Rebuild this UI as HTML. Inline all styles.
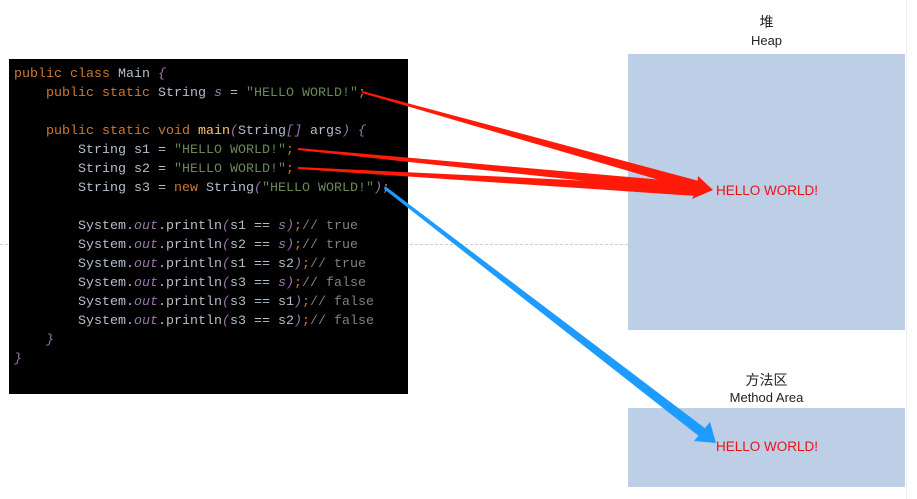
<!DOCTYPE html>
<html><head><meta charset="utf-8"><style>
body{margin:0;width:917px;height:499px;background:#fff;position:relative;overflow:hidden;font-family:"Liberation Sans","Noto Sans CJK SC",sans-serif}
.dash{position:absolute;left:0;top:244px;width:628px;border-top:1px dashed #ccc}
.vl{position:absolute;left:906px;top:0;width:1px;height:499px;background:#eee}
.code{position:absolute;left:9px;top:59px;width:399px;height:335px;background:#000}
pre{margin:0;position:absolute;left:14px;top:65px;font-family:"Liberation Mono",monospace;font-size:13.33px;line-height:19px;color:#b4bfcc}
.k{color:#cc7832}.s{color:#6a8759}.p{color:#9876aa;font-style:italic}.c{color:#808080}.f{color:#ffc66d}
.box{position:absolute;left:628px;width:277px;background:#bccfe7}
.t{position:absolute;width:277px;left:628px;text-align:center;font-size:13px;color:#222}
.h{position:absolute;left:716px;color:#ee1111;font-size:13.5px}
svg{position:absolute;left:0;top:0}
</style></head><body>
<div class="dash"></div><div class="vl"></div>
<div class="t" style="top:12px;font-size:14px">堆</div>
<div class="t" style="top:33px">Heap</div>
<div class="box" style="top:54px;height:276px"></div>
<div class="t" style="top:370px;font-size:14px">方法区</div>
<div class="t" style="top:390px">Method Area</div>
<div class="box" style="top:408px;height:79px"></div>
<div class="h" style="top:183px">HELLO WORLD!</div>
<div class="h" style="top:439px">HELLO WORLD!</div>
<div class="code"></div>
<pre><span class="k">public class</span> Main <span class="p">{</span>
    <span class="k">public static</span> String <span class="p">s</span> = <span class="s">"HELLO WORLD!"</span><span class="k">;</span>

    <span class="k">public static void</span> <span class="f">main</span><span class="p">(</span>String<span class="p">[]</span> args<span class="p">)</span> <span class="p">{</span>
        String s1 = <span class="s">"HELLO WORLD!"</span><span class="k">;</span>
        String s2 = <span class="s">"HELLO WORLD!"</span><span class="k">;</span>
        String s3 = <span class="k">new</span> String<span class="p">(</span><span class="s">"HELLO WORLD!"</span><span class="p">)</span><span class="k">;</span>

        System.<span class="p">out</span>.println<span class="p">(</span>s1 == <span class="p">s)</span><span class="k">;</span><span class="c">// true</span>
        System.<span class="p">out</span>.println<span class="p">(</span>s2 == <span class="p">s)</span><span class="k">;</span><span class="c">// true</span>
        System.<span class="p">out</span>.println<span class="p">(</span>s1 == s2<span class="p">)</span><span class="k">;</span><span class="c">// true</span>
        System.<span class="p">out</span>.println<span class="p">(</span>s3 == <span class="p">s)</span><span class="k">;</span><span class="c">// false</span>
        System.<span class="p">out</span>.println<span class="p">(</span>s3 == s1<span class="p">)</span><span class="k">;</span><span class="c">// false</span>
        System.<span class="p">out</span>.println<span class="p">(</span>s3 == s2<span class="p">)</span><span class="k">;</span><span class="c">// false</span>
    <span class="p">}</span>
<span class="p">}</span></pre>
<svg width="917" height="499">
<g fill="#ff1a0a">
<polygon points="362,91 362,93 697,191 699,181"/>
<polygon points="298,148 298,150 697,193 698,183"/>
<polygon points="298,167 298,169 696,196 697,186"/>
<polygon points="698,176 713,190 692,199 697,189"/>
</g>
<g fill="#1e9bff">
<polygon points="385,186 384,189 700,437 706,429"/>
<polygon points="710,422 716,443 694,441"/>
</g>
</svg>
</body></html>
